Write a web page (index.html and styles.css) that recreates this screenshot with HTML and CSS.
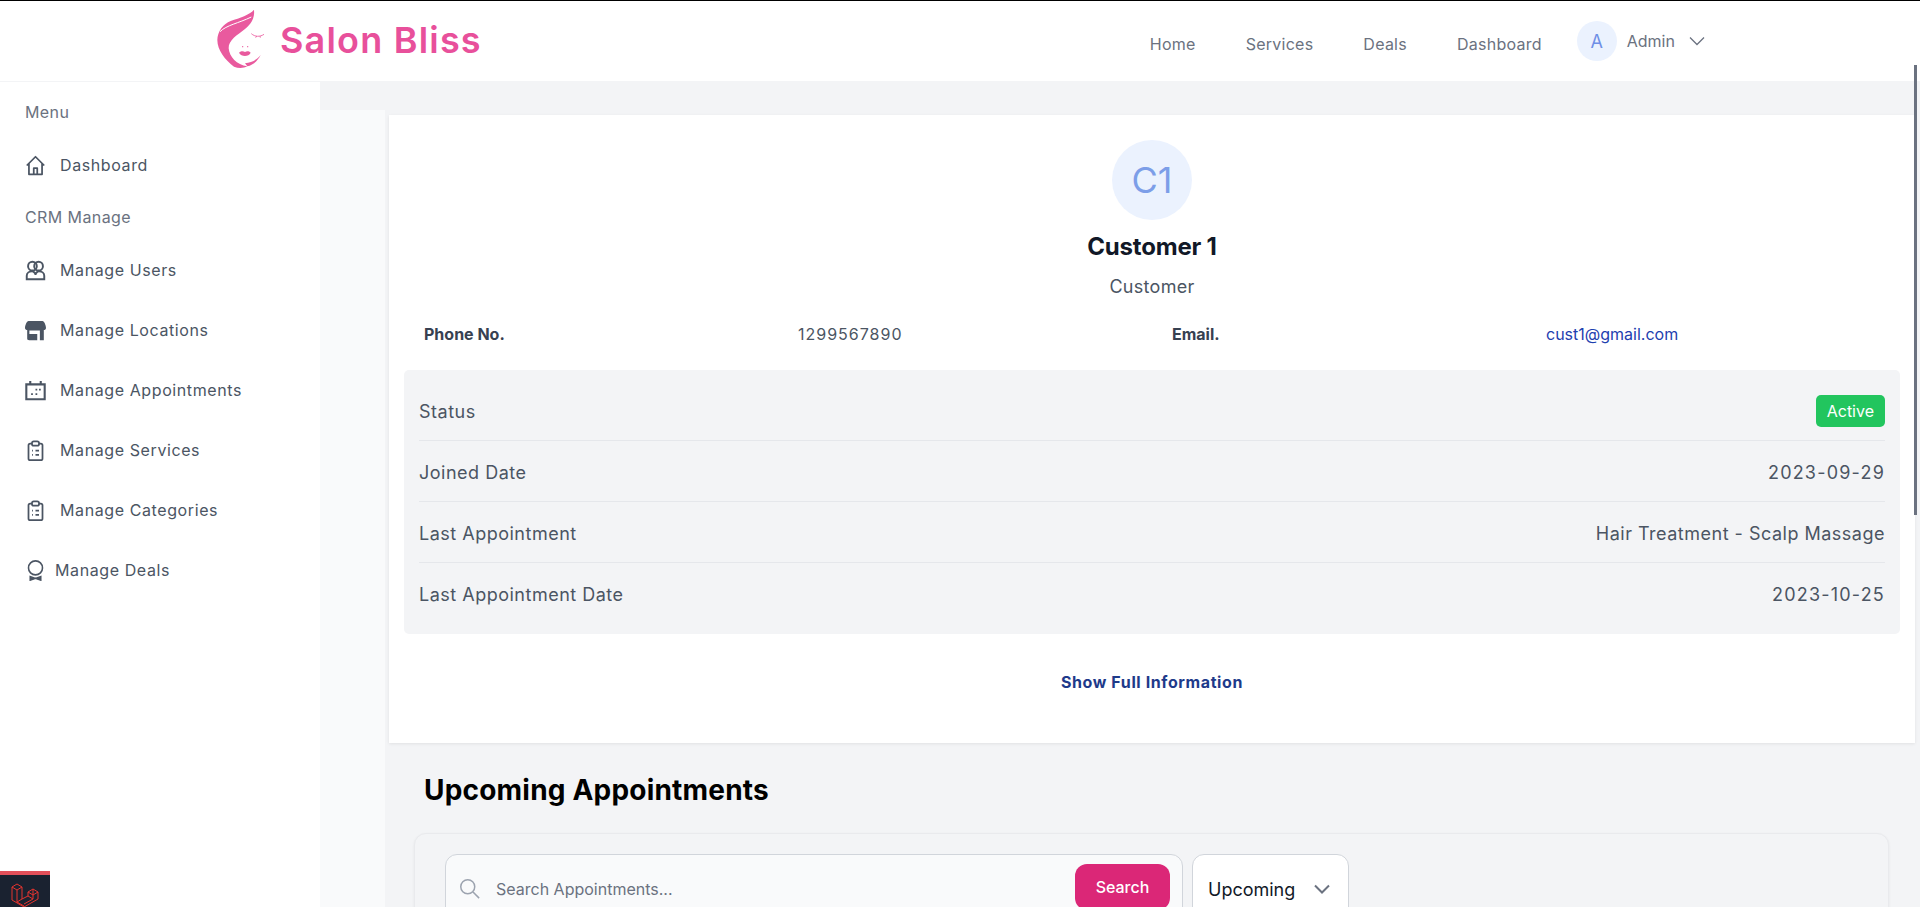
FILE: index.html
```html
<!DOCTYPE html>
<html lang="en">
<head>
  <meta charset="UTF-8">
  <meta name="viewport" content="width=device-width, initial-scale=1.0">
  <title>Salon Bliss - Customer</title>
  <link rel="stylesheet" href="styles.css">
</head>
<body>
  <header class="topbar">
    <a class="brand" href="#">
      <svg class="brand-logo" viewBox="0 0 192 204" fill="#e95a9e">
        <path d="M132 14C118 30 90 38 62 48C40 56 22 80 22 105C22 135 45 165 72 185C85 190 100 190 112 184C80 180 58 155 56 130C55 105 82 90 105 72C122 58 135 40 132 14Z"/>
        <path d="M30 80C50 60 85 55 124 36" fill="none" stroke="#fff" stroke-width="3"/>
        <path d="M112 184C130 180 145 165 152 150C140 165 125 172 105 175Z"/>
        <path d="M124 86C135 96 150 96 162 88M140 93L137 98M150 93L151 98" fill="none" stroke="#e95a9e" stroke-width="2.500"/>
        <path d="M87 143C94 137 100 138 105 141C110 138 116 137 122 143C116 156 94 156 87 143Z"/>
        <circle cx="98" cy="125" r="2"/><circle cx="113" cy="125" r="2"/>
      </svg>
      <span class="brand-name">Salon Bliss</span>
    </a>
    <nav class="topnav">
      <a href="#">Home</a>
      <a href="#">Services</a>
      <a href="#">Deals</a>
      <a href="#">Dashboard</a>
    </nav>
    <div class="user-menu">
      <span class="user-avatar">A</span>
      <span class="user-name">Admin</span>
      <svg class="user-chevron" viewBox="0 0 16 10" fill="none" stroke="currentColor" stroke-width="1.300"><path d="M1 1.500L8 8.500L15 1.500"/></svg>
    </div>
  </header>

  <div class="layout">
    <aside class="sidebar">
      <p class="side-title">Menu</p>
      <a class="side-link" href="#">
        <svg class="side-icon" viewBox="0 0 24 24" fill="none" stroke="currentColor" stroke-width="2" stroke-linejoin="round"><path d="M2 12L12 2L22 12M4.500 10V22H19.500V10M10 22V15H14V22"/></svg>
        Dashboard
      </a>
      <p class="side-title">CRM Manage</p>
      <a class="side-link" href="#">
        <svg class="side-icon" viewBox="0 0 24 24" fill="none" stroke="currentColor" stroke-width="2.200"><circle cx="8.500" cy="7" r="5"/><circle cx="15.500" cy="7" r="5"/><path d="M2 22V18C2 15 5 13 8 13C10 13 12 15 12 17C12 15 14 13 16 13C19 13 22 15 22 18V22Z"/></svg>
        Manage Users
      </a>
      <a class="side-link" href="#">
        <svg class="side-icon" viewBox="0 0 24 24" fill="currentColor"><path d="M4 1H20C22 1 24 6 24 9C24 11 22 11.500 21.500 11.500V23H17V12H5V16H14V23H5C3 23 2.500 22 2.500 21V11.500C1.500 11.500 0 10.500 0 9C0 6 2 1 4 1Z"/></svg>
        Manage Locations
      </a>
      <a class="side-link" href="#">
        <svg class="side-icon" viewBox="0 0 24 24" fill="none" stroke="currentColor" stroke-width="2.400"><path d="M1.500 5H22.500V22H1.500ZM6 1V5M18 1V5"/><path d="M12 11H14M16 11H18M7 16H9M12 16H14" stroke-width="2"/></svg>
        Manage Appointments
      </a>
      <a class="side-link" href="#">
        <svg class="side-icon" viewBox="0 0 24 24" fill="none" stroke="currentColor" stroke-width="2" stroke-linejoin="round"><path d="M8 4H6A2 2 0 0 0 4 6V21A2 2 0 0 0 6 23H18A2 2 0 0 0 20 21V6A2 2 0 0 0 18 4H16"/><rect x="8" y="1.500" width="8" height="5" rx="2"/><path d="M8 12H9M12 12H16M8 17H9M12 17H16"/></svg>
        Manage Services
      </a>
      <a class="side-link" href="#">
        <svg class="side-icon" viewBox="0 0 24 24" fill="none" stroke="currentColor" stroke-width="2" stroke-linejoin="round"><path d="M8 4H6A2 2 0 0 0 4 6V21A2 2 0 0 0 6 23H18A2 2 0 0 0 20 21V6A2 2 0 0 0 18 4H16"/><rect x="8" y="1.500" width="8" height="5" rx="2"/><path d="M8 12H9M12 12H16M8 17H9M12 17H16"/></svg>
        Manage Categories
      </a>
      <a class="side-link side-link-tight" href="#">
        <svg class="side-icon" viewBox="0 0 24 24" fill="none" stroke="currentColor" stroke-width="1.800"><circle cx="12" cy="9" r="8"/><path d="M6 19V23L12 21L18 23V19L12 21Z" fill="currentColor"/></svg>
        Manage Deals
      </a>
      <div class="debug-tab">
        <svg viewBox="0 0 28 28" fill="none" stroke="#e3342f" stroke-width="1"><path d="M1 5L6 2L11 5V17L17 14V10M1 5V18L13 25L27 17V10M1 5L6 8L11 5M6 8V20L13 24M11 17L6 20M17 10L22 7L27 10L22 13L17 10M17 14L22 17L13 22M22 7V13V17"/></svg>
      </div>
    </aside>

    <main class="content">
      <div class="content-inner">
        <section class="profile-card">
          <div class="profile-head">
            <span class="profile-avatar">C1</span>
            <h2 class="profile-name">Customer 1</h2>
            <p class="profile-role">Customer</p>
          </div>
          <div class="contact-row">
            <strong>Phone No.</strong>
            <span class="contact-phone">1299567890</span>
            <strong>Email.</strong>
            <a href="#">cust1@gmail.com</a>
          </div>
          <div class="detail-panel">
            <div class="detail-row"><span>Status</span><span class="badge">Active</span></div>
            <div class="detail-row"><span>Joined Date</span><span class="detail-date">2023-09-29</span></div>
            <div class="detail-row"><span>Last Appointment</span><span>Hair Treatment - Scalp Massage</span></div>
            <div class="detail-row"><span>Last Appointment Date</span><span class="detail-date">2023-10-25</span></div>
          </div>
          <a class="show-more" href="#">Show Full Information</a>
        </section>

        <section class="appointments">
          <h2 class="section-title">Upcoming Appointments</h2>
          <div class="filter-card">
            <div class="filter-bar">
              <form class="search-box">
                <svg class="search-icon" viewBox="0 0 24 24" fill="none" stroke="currentColor" stroke-width="1.700"><circle cx="10" cy="10" r="8"/><path d="M16 16L23 23"/></svg>
                <input class="search-input" type="text" placeholder="Search Appointments...">
                <button class="search-btn" type="button">Search</button>
              </form>
              <div class="status-select">
                <span>Upcoming</span>
                <svg viewBox="0 0 16 10" fill="none" stroke="#6b7280" stroke-width="2"><path d="M1 1.500L8 8.500L15 1.500"/></svg>
              </div>
            </div>
          </div>
        </section>
      </div>
    </main>
  </div>
  <div class="scroll-thumb"></div>
</body>
</html>
```

FILE: styles.css
```css
* { box-sizing: border-box; }
html, body { height: 100%; }
body { margin: 0; overflow: hidden; font-family: Inter, "Noto Sans", sans-serif; color: #4b5563; background: #f3f4f6; border-top: 1px solid #000; }
a { color: inherit; text-decoration: none; }
h2, p { margin: 0; }

.topbar { height: 81px; display: flex; align-items: center; background: #fff; border-bottom: 1px solid #f3f4f6; }
.brand { display: flex; align-items: center; margin-left: 210px; }
.brand-logo { width: 64px; height: 68px; margin-bottom: 4px; }
.brand-name { margin-left: 6px; margin-bottom: 2px; font-size: 36px; font-weight: 600; letter-spacing: 1.2px; color: #e8509b; }
.topnav { display: flex; gap: 50px; margin-left: 668px; padding-top: 5px; font-size: 16px; letter-spacing: .25px; color: #6b7280; }
.user-menu { display: flex; align-items: center; margin-left: 35px; font-size: 16px; color: #6b7280; }
.user-avatar { width: 40px; height: 40px; border-radius: 50%; display: flex; align-items: center; justify-content: center; font-size: 18px; color: #6f8fe6; background: #ebf2fe; }
.user-name { margin-left: 10px; }
.user-chevron { width: 16px; height: 10px; margin-left: 14px; }

.layout { display: flex; height: calc(100vh - 82px); }
.sidebar { position: relative; width: 320px; flex-shrink: 0; padding: 8px 25px 0; background: #fff; }
.side-title { height: 24px; line-height: 24px; margin: 10px 0 11px; font-size: 16px; letter-spacing: .4px; color: #6b7280; }
.side-link { display: flex; align-items: center; gap: 14px; height: 60px; font-size: 16px; letter-spacing: .6px; color: #4b5563; }
.side-icon { width: 21px; height: 21px; flex-shrink: 0; color: #4b5563; }
.side-link-tight { gap: 9px; }
.debug-tab { position: absolute; left: 0; bottom: 0; width: 50px; height: 36px; padding: 7px 11px 0; background: #1a2230; border-top: 4px solid #e3505a; overflow: hidden; }
.debug-tab svg { width: 28px; height: 28px; display: block; }

.content { flex: 1; min-width: 0; padding-top: 28px; }
.content-inner { height: 100%; padding: 5px 5px 0 69px; background: linear-gradient(to right, #f9fafb 65px, #f3f4f6 65px); }

.profile-card { height: 628px; padding: 25px 15px 0; background: #fff; box-shadow: 0 1px 3px rgba(0,0,0,.08); }
.profile-head { display: flex; flex-direction: column; align-items: center; }
.profile-avatar { width: 80px; height: 80px; border-radius: 50%; display: flex; align-items: center; justify-content: center; font-size: 36px; color: #7c9ee8; background: #ebf2fe; }
.profile-name { margin-top: 11px; font-size: 24px; line-height: 32px; font-weight: 700; letter-spacing: -.2px; color: #111827; }
.profile-role { margin-top: 10px; font-size: 18px; line-height: 28px; letter-spacing: .3px; color: #4b5563; }
.contact-row { display: grid; grid-template-columns: repeat(4, 374px); margin-top: 21px; padding-left: 20px; font-size: 16px; line-height: 24px; }
.contact-row strong { color: #374151; font-weight: 700; }
.contact-row a { color: #1e40af; }
.contact-phone { letter-spacing: 1px; }
.detail-panel { margin-top: 24px; padding: 10px 15px; border-radius: 5px; background: #f3f4f6; }
.detail-row { height: 61px; padding-top: 2px; display: flex; align-items: center; justify-content: space-between; font-size: 18px; letter-spacing: .5px; color: #4b5563; border-bottom: 1px solid #e5e7eb; }
.detail-row:last-child { border-bottom: 0; }
.detail-date { letter-spacing: 1.2px; }
.badge { padding: 4px 11px; border-radius: 5px; font-size: 16px; line-height: 24px; letter-spacing: 0; color: #fff; background: #22c55e; }
.show-more { display: block; margin-top: 38px; text-align: center; font-size: 16px; font-weight: 700; letter-spacing: .6px; color: #1e3a8a; }

.section-title { margin: 27px 0 23px 35px; font-size: 28px; line-height: 40px; font-weight: 700; letter-spacing: .2px; color: #000; }
.filter-card { margin-left: 25px; margin-right: 26px; height: 200px; padding: 20px 30px; border: 1px solid #e9eaed; border-radius: 12px; background: #f3f4f6; box-shadow: 0 1px 3px rgba(0,0,0,.06); }
.filter-bar { display: flex; gap: 9px; }
.search-box { width: 738px; height: 80px; display: flex; align-items: flex-start; padding: 9px 12px 0 13px; border: 1px solid #d1d5db; border-radius: 12px; background: #f9fafb; }
.search-icon { width: 21px; height: 21px; margin-top: 14px; color: #9ca3af; flex-shrink: 0; }
.search-input { flex: 1; min-width: 0; height: 30px; margin: 10px 0 0 16px; padding: 0; border: 0; background: transparent; font: 16px Inter, sans-serif; outline: none; }
.search-input::placeholder { color: #6b7280; }
.search-btn { width: 95px; height: 46px; border: 0; border-radius: 12px; background: #db2777; color: #fff; font: 500 16px Inter, sans-serif; }
.status-select { width: 157px; height: 80px; display: flex; align-items: center; justify-content: space-between; padding: 0 18px 10px 15px; border: 1px solid #d1d5db; border-radius: 12px; background: #fff; font-size: 18px; color: #111827; }
.status-select svg { width: 16px; height: 10px; }

.scroll-thumb { position: fixed; right: 3px; top: 65px; width: 3px; height: 450px; background: #6b7280; }
```
